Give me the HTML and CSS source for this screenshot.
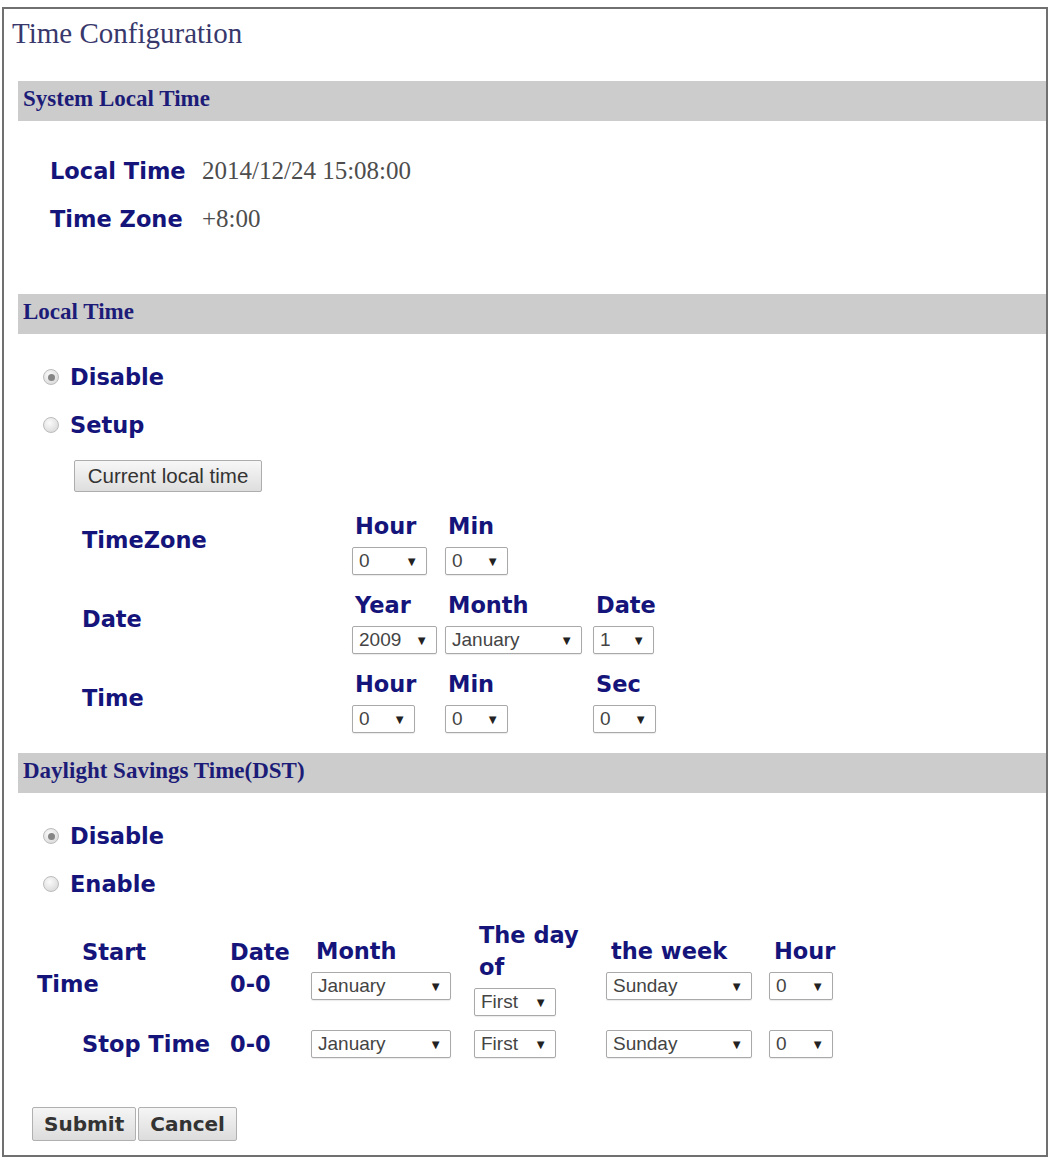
FILE: index.html
```html
<!DOCTYPE html>
<html lang="en">
<head>
  <meta charset="UTF-8">
  <title>Time Configuration</title>
  <link rel="stylesheet" href="styles.css">
</head>
<body>

  <div class="frame">
    <h1 class="page-title">Time Configuration</h1>

    <!-- System Local Time -->
    <div class="section-bar">System Local Time</div>
    <div class="info-grid">
      <span class="label">Local Time</span><span class="value">2014/12/24 15:08:00</span>
      <span class="label">Time Zone</span><span class="value">+8:00</span>
    </div>

    <!-- Local Time -->
    <div class="section-bar">Local Time</div>
    <div class="radio-list">
      <label class="radio-row"><span class="radio checked"></span>Disable</label>
      <label class="radio-row"><span class="radio"></span>Setup</label>
    </div>
    <button class="btn-plain">Current local time</button>

    <div class="setup-grid">
      <div class="row-label">TimeZone</div>
      <div class="field"><span class="field-title">Hour</span><span class="select w75"><span>0</span><i>▼</i></span></div>
      <div class="field"><span class="field-title">Min</span><span class="select w63"><span>0</span><i>▼</i></span></div>
      <div class="field"></div>

      <div class="row-label">Date</div>
      <div class="field"><span class="field-title">Year</span><span class="select w85"><span>2009</span><i>▼</i></span></div>
      <div class="field"><span class="field-title">Month</span><span class="select w137"><span>January</span><i>▼</i></span></div>
      <div class="field"><span class="field-title">Date</span><span class="select w61"><span>1</span><i>▼</i></span></div>

      <div class="row-label">Time</div>
      <div class="field"><span class="field-title">Hour</span><span class="select w63"><span>0</span><i>▼</i></span></div>
      <div class="field"><span class="field-title">Min</span><span class="select w63"><span>0</span><i>▼</i></span></div>
      <div class="field"><span class="field-title">Sec</span><span class="select w63"><span>0</span><i>▼</i></span></div>
    </div>

    <!-- Daylight Savings Time -->
    <div class="section-bar">Daylight Savings Time(DST)</div>
    <div class="radio-list">
      <label class="radio-row"><span class="radio checked"></span>Disable</label>
      <label class="radio-row"><span class="radio"></span>Enable</label>
    </div>

    <div class="dst-grid">
      <div class="dst-label">Start<br>Time</div>
      <div class="dst-date">Date<br>0-0</div>
      <div class="field"><span class="field-title">Month</span><span class="select w140"><span>January</span><i>▼</i></span></div>
      <div class="field"><span class="field-title">The day<br>of</span><span class="select w82"><span>First</span><i>▼</i></span></div>
      <div class="field"><span class="field-title">the week</span><span class="select w146"><span>Sunday</span><i>▼</i></span></div>
      <div class="field"><span class="field-title">Hour</span><span class="select w64"><span>0</span><i>▼</i></span></div>

      <div class="dst-label">Stop Time</div>
      <div class="dst-date">0-0</div>
      <div class="field"><span class="select w140"><span>January</span><i>▼</i></span></div>
      <div class="field"><span class="select w82"><span>First</span><i>▼</i></span></div>
      <div class="field"><span class="select w146"><span>Sunday</span><i>▼</i></span></div>
      <div class="field"><span class="select w64"><span>0</span><i>▼</i></span></div>
    </div>

    <div class="form-actions">
      <button class="btn-bold">Submit</button><button class="btn-bold">Cancel</button>
    </div>
  </div>

</body>
</html>
```

FILE: styles.css
```css
* {
  margin: 0;
  padding: 0;
  box-sizing: border-box;
}

body {
  margin: 7px 2px 0 2px;
  background: #fff;
  font-family: "DejaVu Sans", sans-serif;
}

/* Outer page frame */
.frame {
  border: 2px solid #707070;
  padding-bottom: 14px;
}

.page-title {
  margin: 4px 0 28px;
  padding-left: 8px;
  font-family: "Liberation Serif", serif;
  font-size: 29px;
  font-weight: normal;
  line-height: 40px;
  color: #38386c;
}

/* Gray section header */
.section-bar {
  margin-left: 14px;
  height: 40px;
  padding-left: 5px;
  background: #cccccc;
  font-family: "Liberation Serif", serif;
  font-size: 23px;
  font-weight: bold;
  line-height: 36px;
  color: #1c1c78;
}

.label,
.radio-row,
.row-label,
.field-title,
.dst-label,
.dst-date {
  font-family: "DejaVu Sans", sans-serif;
  font-weight: bold;
  font-size: 22.5px;
  color: #14147a;
}

/* System local time info */
.info-grid {
  display: grid;
  grid-template-columns: 152px auto;
  align-items: baseline;
  margin: 26px 0 51px 46px;
  line-height: 48px;
}

.value {
  font-family: "Liberation Serif", serif;
  font-size: 25px;
  color: #4d4d4d;
}

/* Radio options */
.radio-list {
  margin: 19px 0 11px 39px;
}

.radio-row {
  display: flex;
  align-items: center;
  gap: 11px;
  height: 48px;
}

.radio {
  display: flex;
  align-items: center;
  justify-content: center;
  width: 16px;
  height: 16px;
  border: 1px solid #bcbcbc;
  border-radius: 50%;
  background: radial-gradient(circle at 40% 35%, #fbfbfb, #d2d2d2);
}

.radio.checked::after {
  content: "";
  width: 7px;
  height: 7px;
  border-radius: 50%;
  background: #858585;
}

.btn-plain {
  margin-left: 70px;
  width: 188px;
  height: 32px;
  border: 1px solid #adadad;
  border-radius: 2px;
  background: linear-gradient(#f7f7f7, #dedede);
  font-family: "Liberation Sans", sans-serif;
  font-size: 20.5px;
  color: #333;
}

/* Time zone / date / time pickers */
.setup-grid {
  display: grid;
  grid-template-columns: 270px 93px 148px auto;
  row-gap: 14px;
  margin: 18px 0 20px 78px;
}

.row-label {
  align-self: center;
  line-height: 32px;
  padding-bottom: 6px;
}

.field {
  display: flex;
  flex-direction: column;
  align-items: flex-start;
}

.field-title {
  padding-left: 3px;
  line-height: 32px;
  margin-bottom: 5px;
}

.select {
  display: flex;
  align-items: center;
  justify-content: space-between;
  height: 28px;
  padding: 0 8px 0 6px;
  border: 1px solid #a9a9a9;
  border-radius: 2px;
  background: #fff;
  box-shadow: 0 1px 1px rgba(0, 0, 0, 0.08);
  font-family: "Liberation Sans", sans-serif;
  font-size: 19px;
  color: #444;
}

.select i {
  font-style: normal;
  font-size: 13px;
  color: #222;
}

.w61 { width: 61px; }
.w63 { width: 63px; }
.w64 { width: 64px; }
.w75 { width: 75px; }
.w82 { width: 82px; }
.w85 { width: 85px; }
.w137 { width: 137px; }
.w140 { width: 140px; }
.w146 { width: 146px; }

/* DST start / stop table */
.dst-grid {
  display: grid;
  grid-template-columns: 193px 81px 163px 132px 163px auto;
  align-items: center;
  row-gap: 12px;
  margin: 0 0 47px 33px;
}

.dst-grid .field-title {
  padding-left: 5px;
}

.dst-label {
  text-indent: 45px;
  line-height: 32px;
}

.dst-date {
  line-height: 32px;
}

.form-actions {
  display: flex;
  gap: 2px;
  margin-left: 28px;
}

.btn-bold {
  height: 34px;
  padding: 0 11px;
  border: 1px solid #b0b0b0;
  border-radius: 2px;
  background: linear-gradient(#f5f5f5, #dcdcdc);
  font-family: "DejaVu Sans", sans-serif;
  font-weight: bold;
  font-size: 20px;
  color: #333;
}
```
